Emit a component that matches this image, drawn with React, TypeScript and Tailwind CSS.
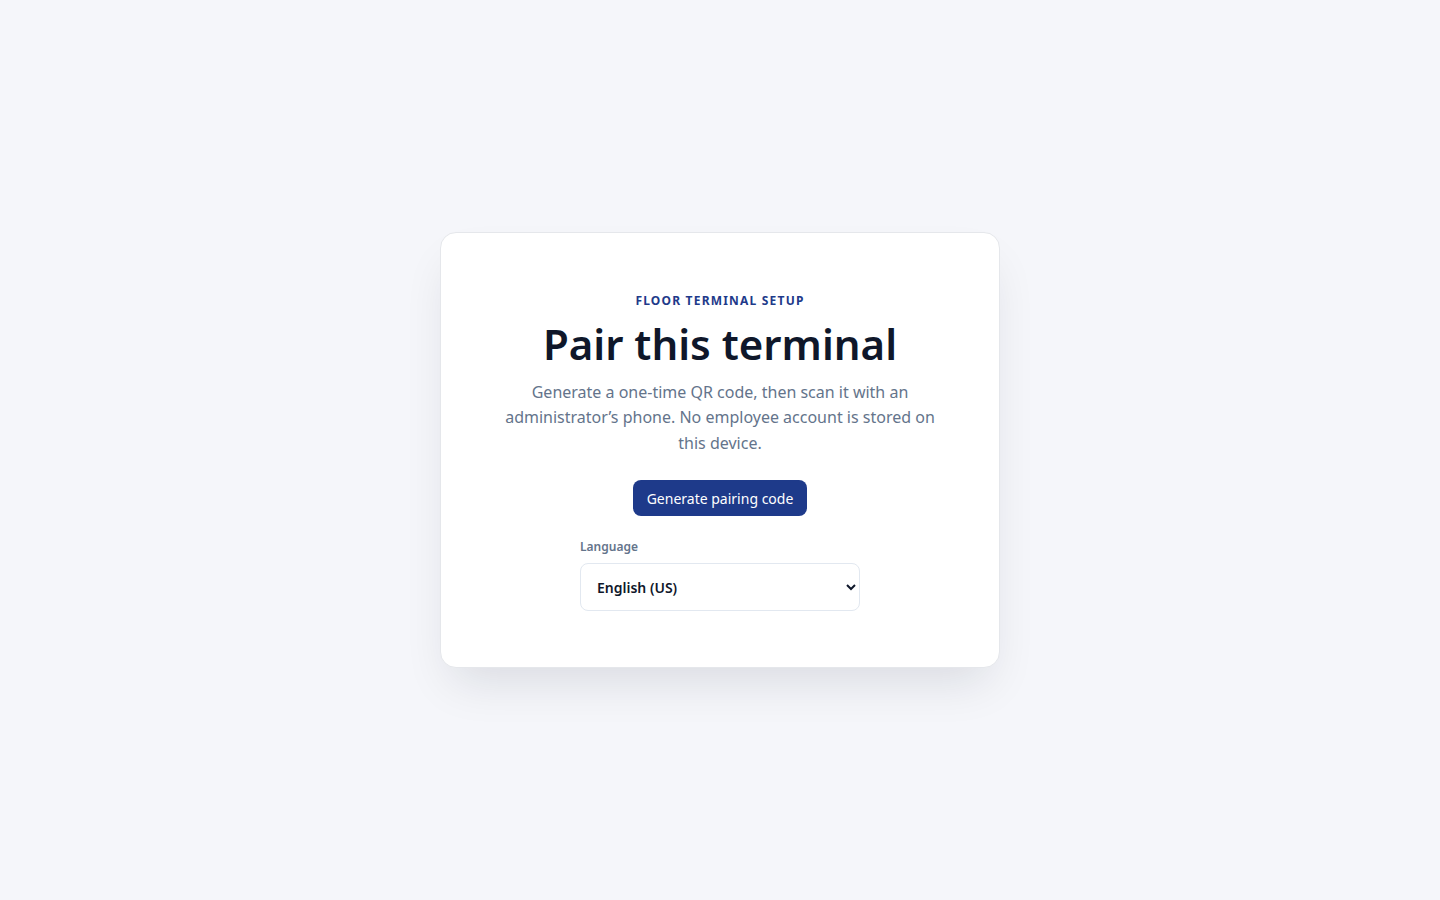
export default function App() {
  return (
    <div
      className="min-h-screen bg-[#f5f6fa] flex items-center justify-center"
      style={{ fontFamily: '"Noto Sans", "Open Sans", sans-serif' }}
    >
      <div className="w-[560px] bg-white rounded-2xl border border-[#e5e7eb] shadow-[0_24px_48px_-12px_rgba(15,23,42,0.12)] px-14 pt-[59px] pb-14 flex flex-col items-center text-center">
        <div className="text-[12px] leading-4 mt-px font-bold tracking-[0.1em] text-[#1e3a8a] uppercase">
          Floor terminal setup
        </div>
        <h1 className="mt-[7px] text-[42px] leading-[56px] font-semibold text-[#0f172a]">Pair this terminal</h1>
        <p className="mt-2 text-[16px] leading-[25.5px] text-[#64748b] max-w-[440px]">
          Generate a one-time QR code, then scan it with an administrator’s phone. No employee account is stored on
          this device.
        </p>
        <button className="mt-6 h-9 px-[14px] rounded-lg bg-[#1e3a8a] text-white text-[14px] font-normal">
          Generate pairing code
        </button>
        <div className="mt-[23px] w-[280px] text-left">
          <label className="block text-[12px] leading-4 font-semibold text-[#64748b] mb-2">Language</label>
          <select className="w-full h-12 rounded-lg border border-[#e2e8f0] bg-white pl-3 pr-3 text-[14px] font-semibold text-[#0f172a]">
            <option>English (US)</option>
          </select>
        </div>
      </div>
    </div>
  );
}
